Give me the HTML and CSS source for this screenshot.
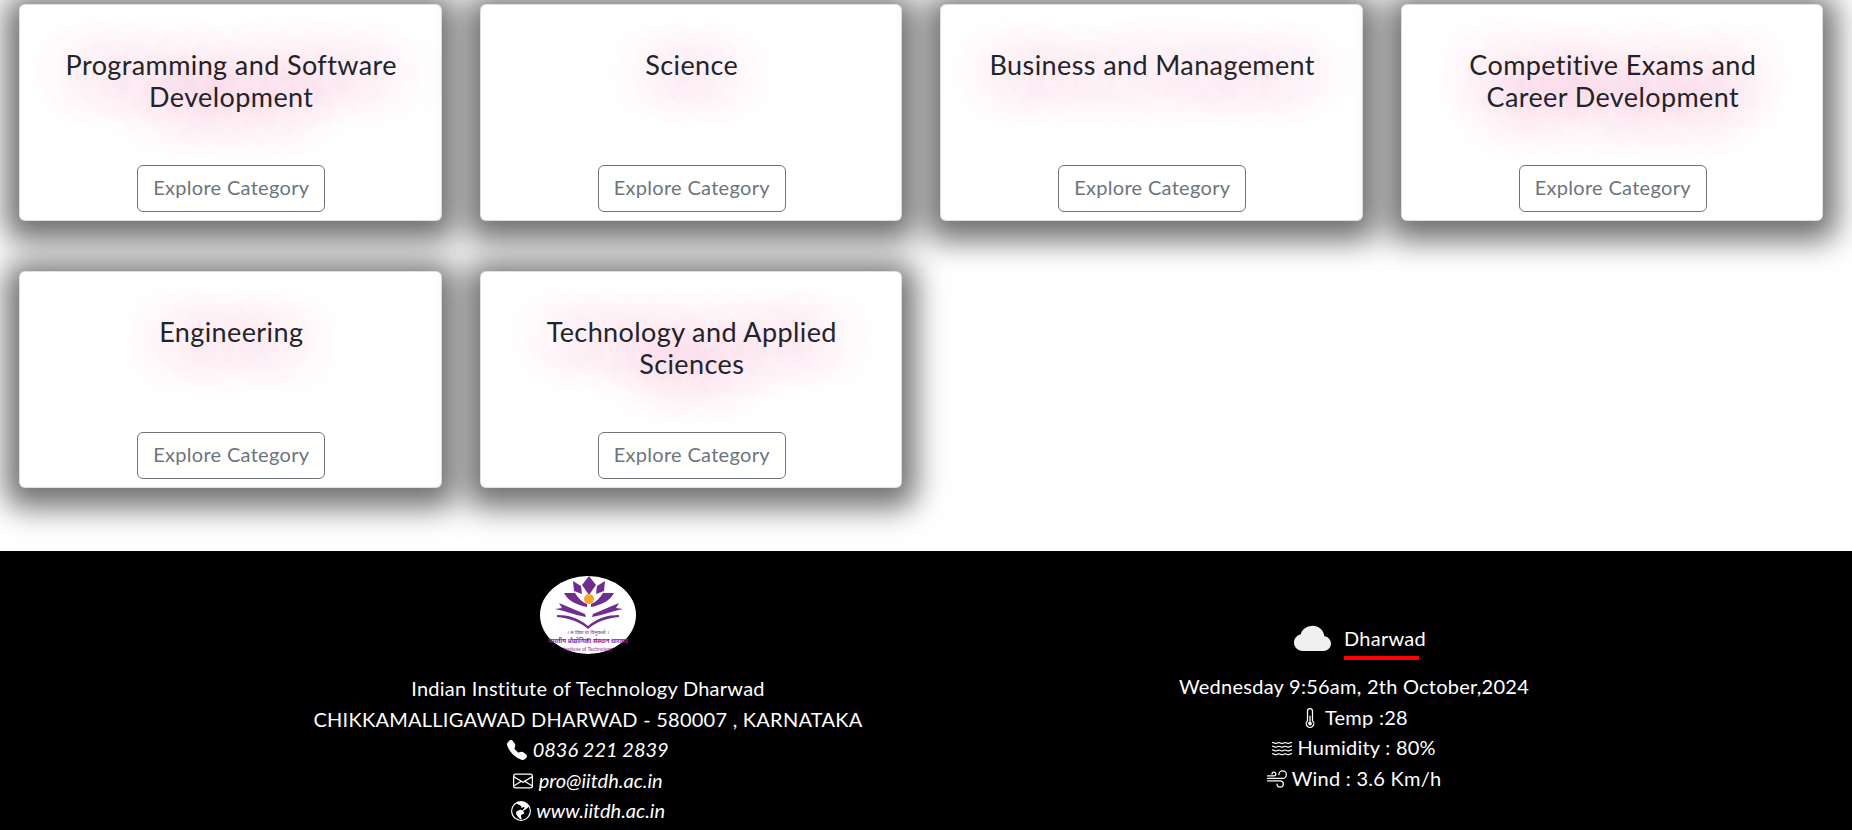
FILE: index.html
```html
<!DOCTYPE html>
<html lang="en">
	<head>
		<meta charset="UTF-8" />
		<title>Categories</title>
		<link rel="stylesheet" href="styles.css">
	</head>

	<body>
		<svg class="defs" width="0" height="0">
			<defs>
				<path id="wave" d="M.036 3.314a.5.5 0 0 1 .65-.278l1.757.703a1.5 1.5 0 0 0 1.114 0l1.014-.406a2.5 2.5 0 0 1 1.857 0l1.015.406a1.5 1.5 0 0 0 1.114 0l1.014-.406a2.5 2.5 0 0 1 1.857 0l1.015.406a1.5 1.5 0 0 0 1.114 0l1.757-.703a.5.5 0 1 1 .372.928l-1.758.703a2.5 2.5 0 0 1-1.857 0l-1.014-.406a1.5 1.5 0 0 0-1.114 0l-1.015.406a2.5 2.5 0 0 1-1.857 0l-1.014-.406a1.5 1.5 0 0 0-1.114 0l-1.015.406a2.5 2.5 0 0 1-1.857 0L.314 3.964a.5.5 0 0 1-.278-.65z"/>
			</defs>
		</svg>

		<main class="categories">
			<div class="card">
				<h5 class="card-title">Programming and Software Development</h5>
				<a class="btn" href="#">Explore Category</a>
			</div>
			<div class="card">
				<h5 class="card-title">Science</h5>
				<a class="btn" href="#">Explore Category</a>
			</div>
			<div class="card">
				<h5 class="card-title">Business and Management</h5>
				<a class="btn" href="#">Explore Category</a>
			</div>
			<div class="card">
				<h5 class="card-title">Competitive Exams and Career Development</h5>
				<a class="btn" href="#">Explore Category</a>
			</div>
			<div class="card">
				<h5 class="card-title">Engineering</h5>
				<a class="btn" href="#">Explore Category</a>
			</div>
			<div class="card">
				<h5 class="card-title">Technology and Applied Sciences</h5>
				<a class="btn" href="#">Explore Category</a>
			</div>
		</main>

		<footer class="site-footer">
			<div class="contact">
				<svg class="logo" viewBox="0 0 96 78">
					<ellipse cx="48" cy="39" rx="48" ry="39" fill="#fff"/>
					<g fill="#6f2c91">
						<path d="M49 0l7 9-7 10-7-10z"/>
						<path d="M33 5l8 5 1 8-8-3z"/>
						<path d="M65 5l-8 5-1 8 8-3z"/>
						<path d="M24 17h11c3 5 7 9 12 11v3C37 29 28 25 24 17z"/>
						<path d="M74 17H63c-3 5-7 9-12 11v3c10-2 19-6 23-14z"/>
						<path d="M19 27l26 11 1 3C35 39 25 35 15 33l7-1z"/>
						<path d="M79 27L53 38l-1 3c11-2 21-6 31-8l-7-1z"/>
						<path d="M17 39c11 0 22 3 31 11 9-8 20-11 31-11v2c-11 1-22 4-31 12-9-8-20-11-31-12z"/>
					</g>
					<circle cx="49" cy="23" r="5" fill="#f5a623"/>
					<text class="logo-motto" x="48" y="58" text-anchor="middle">। स विद्या या विमुक्तये ।</text>
					<text class="logo-name" x="48" y="67" text-anchor="middle">भारतीय प्रौद्योगिकी संस्थान धारवाड़</text>
					<text class="logo-name-en" x="48" y="75" text-anchor="middle">Institute of Technology</text>
				</svg>
				<p>Indian Institute of Technology Dharwad</p>
				<p>CHIKKAMALLIGAWAD DHARWAD - 580007 , KARNATAKA</p>
				<p>
					<svg class="icon" viewBox="0 0 16 16"><path d="M1.885.511a1.745 1.745 0 0 1 2.61.163L6.29 2.98c.329.423.445.974.315 1.494l-.547 2.19a.678.678 0 0 0 .178.643l2.457 2.457a.678.678 0 0 0 .644.178l2.189-.547a1.745 1.745 0 0 1 1.494.315l2.306 1.794c.829.645.905 1.87.163 2.611l-1.034 1.034c-.74.74-1.846 1.065-2.877.702a18.634 18.634 0 0 1-7.01-4.42 18.634 18.634 0 0 1-4.42-7.009c-.362-1.03-.037-2.137.703-2.877L1.885.511z"/></svg>
					<em>0836 221 2839</em>
				</p>
				<p>
					<svg class="icon" viewBox="0 0 16 16"><path d="M0 4a2 2 0 0 1 2-2h12a2 2 0 0 1 2 2v8a2 2 0 0 1-2 2H2a2 2 0 0 1-2-2V4Zm2-1a1 1 0 0 0-1 1v.217l7 4.2 7-4.2V4a1 1 0 0 0-1-1H2Zm13 2.383-4.708 2.825L15 11.105V5.383Zm-.034 6.876-5.64-3.471L8 9.583l-1.326-.795-5.64 3.47A1 1 0 0 0 2 13h12a1 1 0 0 0 .966-.741ZM1 11.105l4.708-2.897L1 5.383v5.722Z"/></svg>
					<em>pro@iitdh.ac.in</em>
				</p>
				<p>
					<svg class="icon" viewBox="0 0 16 16"><path transform="matrix(-1 0 0 1 16 0)" d="M8 16A8 8 0 1 0 8 0a8 8 0 0 0 0 16ZM2.04 4.326c.325 1.329 2.532 2.54 3.717 3.19.48.263.793.434.743.484-.08.08-.162.158-.242.234-.416.396-.787.749-.758 1.266.035.634.618.824 1.214 1.017.577.188 1.168.38 1.286.983.082.417-.075.988-.22 1.52-.215.782-.406 1.48.22 1.48 1.5-.5 3.798-3.186 4-5 .138-1.243-2-2-3.5-2.5-.478-.16-.755.081-.99.284-.172.15-.322.279-.51.216-.445-.148-2.5-2-1.5-2.5.78-.39.952-.171 1.227.182.078.099.163.208.273.318.609.304.662-.132.723-.633.039-.322.081-.671.277-.867.434-.434 1.265-.791 2.028-1.12.712-.306 1.365-.587 1.579-.88A7 7 0 1 1 2.04 4.327Z"/></svg>
					<em>www.iitdh.ac.in</em>
				</p>
			</div>

			<div class="weather">
				<div class="city-row">
					<svg class="cloud" viewBox="0 0 16 16"><path d="M4.406 3.342A5.53 5.53 0 0 1 8 2c2.69 0 4.923 2 5.166 4.579C14.758 6.804 16 8.137 16 9.773 16 11.569 14.502 13 12.687 13H3.781C1.708 13 0 11.366 0 9.318c0-1.763 1.266-3.223 2.942-3.593.143-.863.698-1.723 1.464-2.383z"/></svg>
					<span class="city">Dharwad</span>
				</div>
				<p>Wednesday 9:56am, 2th October,2024</p>
				<p>
					<svg class="icon" viewBox="0 0 16 16"><path d="M9.5 12.5a1.5 1.5 0 1 1-2-1.415V6.5a.5.5 0 0 1 1 0v4.585a1.5 1.5 0 0 1 1 1.415z"/><path d="M5.5 2.5a2.5 2.5 0 0 1 5 0v7.55a3.5 3.5 0 1 1-5 0V2.5zM8 1a1.5 1.5 0 0 0-1.5 1.5v7.987l-.167.15a2.5 2.5 0 1 0 3.333 0l-.166-.15V2.5A1.5 1.5 0 0 0 8 1z"/></svg>
					Temp :28
				</p>
				<p>
					<svg class="icon" viewBox="0 0 16 16"><use href="#wave"/><use href="#wave" y="3"/><use href="#wave" y="6"/><use href="#wave" y="9"/></svg>
					Humidity : 80%
				</p>
				<p>
					<svg class="icon" viewBox="0 0 16 16"><path d="M12.5 2A2.5 2.5 0 0 0 10 4.5a.5.5 0 0 1-1 0A3.5 3.5 0 1 1 12.5 8H.5a.5.5 0 0 1 0-1h12a2.5 2.5 0 0 0 0-5zm-7 1a1 1 0 0 0-1 1 .5.5 0 0 1-1 0 2 2 0 1 1 2 2h-5a.5.5 0 0 1 0-1h5a1 1 0 0 0 0-2zM0 9.5A.5.5 0 0 1 .5 9h10.042a3 3 0 1 1-3 3 .5.5 0 0 1 1 0 2 2 0 1 0 2-2H.5a.5.5 0 0 1-.5-.5z"/></svg>
					Wind : 3.6 Km/h
				</p>
			</div>
		</footer>
	</body>
</html>
```

FILE: styles.css
```css
:root {
	--text-dark: #212529;
	--btn-color: #6c757d;
}

html, body {
	margin: 0;
	padding: 0;
}

body {
	background: #fff;
	color: var(--text-dark);
	font-family: "Lato", "Noto Sans", sans-serif;
}

.defs {
	position: absolute;
}

p {
	margin: 0;
}

em {
	letter-spacing: 0;
}

.categories {
	display: grid;
	grid-template-columns: repeat(4, 422.5px);
	grid-auto-rows: 216.5px;
	column-gap: 38px;
	row-gap: 50.5px;
	padding: 4px 0 63.5px 19px;
}

.card {
	display: flex;
	flex-direction: column;
	align-items: center;
	box-sizing: border-box;
	padding: 44px 39px 8px 41px;
	background: #fff;
	border: 1px solid rgba(0, 0, 0, .125);
	border-radius: 6px;
	box-shadow: 0 6px 30px 14px rgba(0, 0, 0, .56);
}

.card-title {
	margin: 0;
	font-size: 27px;
	font-weight: 400;
	letter-spacing: .4px;
	line-height: 32px;
	text-align: center;
	text-shadow: 0 6px 50px rgba(220, 60, 150, .8);
}

.btn {
	margin-top: auto;
	box-sizing: border-box;
	width: 188px;
	height: 47px;
	border: 1px solid var(--btn-color);
	border-radius: 6px;
	color: var(--btn-color);
	font-size: 20px;
	letter-spacing: .3px;
	line-height: 43px;
	text-align: center;
	text-decoration: none;
}

.site-footer {
	display: grid;
	grid-template-columns: 766px 766px;
	height: 279px;
	padding: 0 115px 0 205px;
	overflow: hidden;
	background: #000;
	color: #fff;
	font-size: 20px;
	letter-spacing: .25px;
	line-height: 30.6px;
	text-align: center;
}

.contact {
	padding-top: 25px;
}

.logo {
	display: block;
	width: 96px;
	height: 78px;
	margin: 0 auto 19px;
}

.logo text {
	letter-spacing: 0;
}

.logo-motto {
	font-size: 5px;
	fill: #6f2c91;
	font-family: "Noto Sans", sans-serif;
}

.logo-name {
	font-size: 6px;
	font-weight: 700;
	fill: #8e1f9e;
	font-family: "Noto Sans", sans-serif;
}

.logo-name-en {
	font-size: 5px;
	fill: #8e1f9e;
	font-family: "Liberation Sans", sans-serif;
}

.icon {
	width: 20px;
	height: 20px;
	vertical-align: -3px;
	fill: #fff;
}

.weather {
	padding-top: 72px;
}

.city-row {
	display: flex;
	justify-content: center;
	align-items: flex-start;
	gap: 13px;
	height: 48px;
	padding-left: 12px;
}

.cloud {
	width: 37px;
	height: 37px;
	margin-top: -2px;
	fill: #f0f0f0;
}

.city::after {
	content: "";
	display: block;
	width: 75px;
	height: 4px;
	margin-top: 2px;
	background: #f00;
}
```
